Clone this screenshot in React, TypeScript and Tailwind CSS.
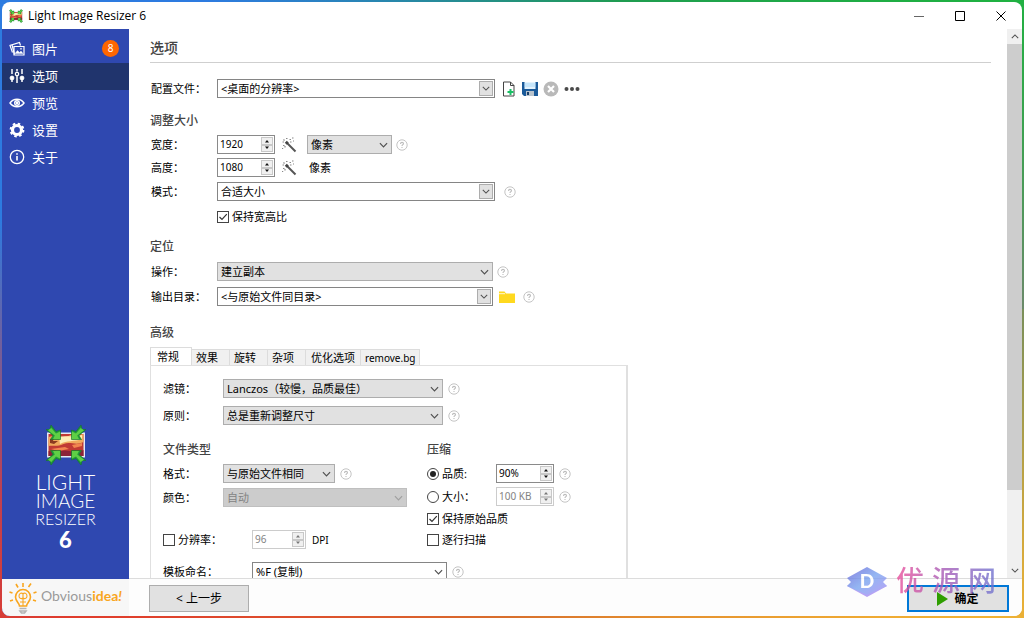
import { useState, type ReactNode } from 'react';
import clsx from 'clsx';

const TABS = ['常规', '效果', '旋转', '杂项', '优化选项', 'remove.bg'];

const ChevronIcon = ({ className }: { className?: string }) => (
  <svg viewBox="0 0 10 6" className={className} fill="none" stroke="currentColor" strokeWidth="1.3">
    <path d="M1 1l4 4 4-4" />
  </svg>
);

const HelpButton = () => (
  <button type="button" aria-label="帮助" className="shrink-0 text-[#bdbdbd]">
    <svg viewBox="0 0 12 12" className="w-3 h-3" fill="none" stroke="currentColor">
      <circle cx="6" cy="6" r="5.2" strokeWidth="0.9" />
      <path d="M4.5 4.9c0-1 .7-1.5 1.5-1.5s1.5.5 1.5 1.3c0 .9-1.5 1.1-1.5 2.2" strokeWidth="1.1" />
      <path d="M6 8v1" strokeWidth="1.1" />
    </svg>
  </button>
);

const WandIcon = () => (
  <svg viewBox="0 0 16 16" className="w-4 h-4" fill="none" stroke="#555">
    <path d="M5.5 5.5L14.5 14.5" strokeWidth="2" />
    <path d="M4.8 4.800L6.800 6.800" strokeWidth="2.800" stroke="#444" />
    <path d="M5 1.500h1.500M8.500 2.500h1.500M11 1h1.500M9 5h1.500M12 4h1M1.500 5h1.500M2.500 2.500l1 1M2 8.500h1.500M4 10.500v-1.500M1 11.500h1.200" strokeWidth="1.200" stroke="#888" />
  </svg>
);

interface SelectProps {
  id: string;
  value: string;
  variant?: 'list' | 'combo' | 'plain';
  disabled?: boolean;
  className: string;
}

const Select = ({ id, value, variant = 'list', disabled, className }: SelectProps) => (
  <div className={clsx('relative shrink-0', className)}>
    <select
      id={id}
      disabled={disabled}
      className={clsx(
        'block w-full h-[19px] appearance-none border pl-[3px] pr-5 text-[11px] leading-[17px] outline-none',
        variant === 'list' && !disabled && 'bg-[#e1e1e1] border-[#adadad]',
        variant === 'list' && disabled && 'bg-[#cccccc] border-[#bfbfbf] text-[#838383]',
        variant !== 'list' && 'bg-white border-[#858585]'
      )}
    >
      <option>{value}</option>
    </select>
    {variant === 'combo' ? (
      <span className="pointer-events-none absolute right-0.5 inset-y-0.5 w-[14px] bg-[#e1e1e1] border border-[#adadad] flex items-center justify-center text-[#505050]">
        <ChevronIcon className="w-2 h-[5px]" />
      </span>
    ) : (
      <span className={clsx('pointer-events-none absolute right-1 inset-y-0 flex items-center', disabled ? 'text-[#a0a0a0]' : 'text-[#505050]')}>
        <ChevronIcon className="w-[9px] h-[6px]" />
      </span>
    )}
  </div>
);

const SpinBox = ({ id, value, disabled, className, label }: { id: string; value: string; disabled?: boolean; className: string; label?: string }) => (
  <div className={clsx('flex h-[19px] shrink-0 border bg-white p-px', disabled ? 'border-[#cccccc]' : 'border-[#8a8a8a]', className)}>
    <input
      id={id}
      type="text"
      aria-label={label}
      defaultValue={value}
      disabled={disabled}
      className={clsx('min-w-0 flex-1 pl-px text-[10px] leading-[15px] outline-none', disabled && 'text-[#838383]')}
    />
    <div className="flex flex-col w-3">
      {['M1 3.500l2-2.500 2 2.500z', 'M1 .5l2 2.500 2-2.500z'].map((d, i) => (
        <button
          key={d}
          type="button"
          disabled={disabled}
          aria-label={i === 0 ? '增加' : '减少'}
          className="flex-1 flex items-center justify-center bg-[#f0f0f0] border border-[#c8c8c8]"
        >
          <svg viewBox="0 0 6 4" className="w-[6px] h-1" fill={disabled ? '#777' : '#111'}>
            <path d={d} />
          </svg>
        </button>
      ))}
    </div>
  </div>
);

const Check = ({ id, checked, children }: { id: string; checked?: boolean; children: ReactNode }) => (
  <label htmlFor={id} className="flex items-center gap-[3px]">
    <span className="relative w-3 h-3">
      <input id={id} type="checkbox" defaultChecked={checked} className="peer block w-3 h-3 appearance-none border border-[#444] bg-white" />
      <svg viewBox="0 0 12 12" className="pointer-events-none absolute inset-0 hidden peer-checked:block" fill="none" stroke="#333" strokeWidth="1.2">
        <path d="M2.500 6l2.500 2.500L9.800 3.200" />
      </svg>
    </span>
    {children}
  </label>
);

const Radio = ({ id, checked, children }: { id: string; checked?: boolean; children: ReactNode }) => (
  <label htmlFor={id} className="flex items-center gap-[3px] w-[69px]">
    <span className="relative w-3 h-3">
      <input id={id} name="compression" type="radio" defaultChecked={checked} className="peer block w-3 h-3 appearance-none rounded-full border border-[#444] bg-white" />
      <span className="pointer-events-none absolute inset-[3px] rounded-full bg-[#222] hidden peer-checked:block" />
    </span>
    {children}
  </label>
);

const Row = ({ id, label, wide = true, small, children }: { id: string; label: string; wide?: boolean; small?: boolean; children: ReactNode }) => (
  <div className={clsx('flex items-center', small ? 'h-[23px]' : 'h-[25px]')}>
    <label htmlFor={id} className={clsx('shrink-0', wide ? 'w-[67px] pl-px' : 'w-[60px]')}>{label}</label>
    {children}
  </div>
);

const Heading = ({ children, className }: { children: ReactNode; className?: string }) => (
  <h2 className={clsx('h-6 flex items-center text-xs font-medium text-[#444]', className)}>{children}</h2>
);

// Picture squeezed by four green arrows
const ResizerLogo = ({ className }: { className: string }) => (
  <svg viewBox="0 0 40 40" className={className}>
    <rect x="1" y="7.500" width="38" height="25" fill="#e6e8f2" />
    <rect x="2.500" y="9" width="35" height="22" fill="#c03a34" />
    <path d="M2.500 12c8-3 14 2 20-1s10 0 15-2v8c-8 4-13-1-20 2s-10 1-15 2z" fill="#f0a95c" />
    <path d="M13 12c6-2 14 1 23-2v4c-8 3-15 1-22 5z" fill="#fdeeb5" />
    <path d="M2.500 26c9 2 14-2 21 0s9 1 14-1v6h-35z" fill="#8b2338" />
    <path d="M5 24l14-2 4 2-11 2zM26 20l10-2v3l-8 2z" fill="#f2854f" />
    <path d="M4 14l4-1-1 3 5 0-4 3-4-1z" fill="#8b3a20" />
    {['', 'translate(40 0) scale(-1 1)', 'translate(0 40) scale(1 -1)', 'translate(40 40) scale(-1 -1)'].map((t) => (
      <g key={t} transform={t || undefined}>
        <path d="M0 4.500L3.800 4.500 5 0 10 6.500 14.500 5V14.500H4.500L7 10.500z" fill="#1f9a38" stroke="#15752a" strokeWidth="0.6" />
        <path d="M2 5.200L5.300 3 10 8.500l4-2V14H7l1.800-3.500z" fill="#5fcf45" />
      </g>
    ))}
  </svg>
);

const NAV: { label: string; icon: ReactNode; badge?: number }[] = [
  {
    label: '图片',
    badge: 8,
    icon: (
      <g fill="none" stroke="currentColor" strokeWidth="1.200">
        <path d="M3.500 11.500L1 4.500l9.500-3 1 3" />
        <path d="M3 3.900l2.500 9.600" />
        <path d="M5 5.500h10v8.500H5z" />
        <path d="M6 12.500l2.500-3 2 2 1.500-1.500 2 2.500z" fill="currentColor" strokeWidth="0.4" />
        <circle cx="12" cy="7.800" r=".7" fill="currentColor" strokeWidth="0.300" />
      </g>
    ),
  },
  {
    label: '选项',
    icon: (
      <g stroke="currentColor" fill="currentColor">
        <path d="M3 1v5M3 9v5M8 1v2.500M8 8v7M13 1v5M13 10v4" strokeWidth="1.500" />
        <circle cx="3" cy="10" r="1.900" />
        <circle cx="8" cy="6" r="1.700" fill="none" strokeWidth="1.200" />
        <circle cx="13" cy="10" r="1.900" />
      </g>
    ),
  },
  {
    label: '预览',
    icon: (
      <g fill="none" stroke="currentColor" strokeWidth="1.400">
        <path d="M1 8c3.500-5 10.500-5 14 0-3.500 5-10.500 5-14 0z" />
        <circle cx="8" cy="8" r="2.300" />
        <circle cx="8" cy="8" r=".6" fill="currentColor" />
      </g>
    ),
  },
  {
    label: '设置',
    icon: (
      <g fill="none" stroke="currentColor">
        <circle cx="8" cy="8" r="4.500" strokeWidth="3.200" />
        <circle cx="8" cy="8" r="6.400" strokeWidth="2" strokeDasharray="2.510 2.510" />
      </g>
    ),
  },
  {
    label: '关于',
    icon: (
      <g fill="none" stroke="currentColor">
        <circle cx="8" cy="8" r="6.700" strokeWidth="1.300" />
        <path d="M8 7v4.500M8 4.300v1.500" strokeWidth="1.600" />
      </g>
    ),
  },
];

const Sidebar = () => {
  const [active, setActive] = useState('选项');

  return (
    <aside className="w-[127px] shrink-0 flex flex-col bg-[#2f48b0] text-white">
      <nav className="pt-[7px]">
        {NAV.map((item) => (
          <button
            key={item.label}
            type="button"
            onClick={() => setActive(item.label)}
            className={clsx('w-full h-[27px] flex items-center gap-[7px] pl-[7px] pr-2.5 pb-0.5 text-[13px]', active === item.label && 'bg-[#20346d]')}
          >
            <svg viewBox="0 0 16 16" className="w-4 h-4">{item.icon}</svg>
            {item.label}
            {item.badge && (
              <span className="ml-auto w-[17px] h-[17px] rounded-full bg-[#ff6600] text-[10px] leading-[17px] text-center">{item.badge}</span>
            )}
          </button>
        ))}
      </nav>
      <div className="mt-auto pb-[26px] flex flex-col items-center font-['Lato',sans-serif] font-light">
        <ResizerLogo className="w-10 h-10 mb-[7px]" />
        <span className="text-[21px] leading-5">LIGHT</span>
        <span className="text-[19px] leading-[18px]">IMAGE</span>
        <span className="text-[16px] leading-[17px]">RESIZER</span>
        <span className="text-[22px] leading-[26px] font-black">6</span>
      </div>
      <div className="h-[37px] bg-[#f7f7f7] flex items-center pl-[7px] gap-1">
        <svg viewBox="0 0 28 32" className="w-7 h-8" fill="none" stroke="#f9a61f" strokeWidth="1.600">
          <path d="M10.500 24c0-3-4-4.500-4-9a7.500 7.500 0 0115 0c0 4.500-4 6-4 9z" />
          <path d="M10 14c0-3 3-3.500 4-2 1-1.500 4-1 4 2s-3 3-4 2c-1 1-4 1-4-2zM14 12v12M11 20h6" strokeWidth="1.100" />
          <path d="M14 1v4M7 2l2 3.500M22 1.500L19.500 5M.5 10l3 1M27.500 10l-3 1M1 19l3-1M27 19l-3-1" />
          <path d="M10.500 26.500h7M11 29h6l-1.500 2h-3z" stroke="#b5b5b5" />
        </svg>
        <span className="pb-1 font-['Lato',sans-serif] text-[14px] text-[#9a9a9a]">
          Obvious<b className="text-[#f9a61f]">idea<i>!</i></b>
        </span>
      </div>
    </aside>
  );
};

const AdvancedPanel = () => (
  <div className="max-w-[478px] border-2 border-t border-l border-[#e0e0e0] bg-white pl-3 pt-2.5 pb-10">
    <div className="flex flex-col gap-0.5">
      <Row id="filter" label="滤镜：" wide={false}>
        <Select id="filter" value="Lanczos（较慢，品质最佳）" className="w-[220px] mr-[5px]" />
        <HelpButton />
      </Row>
      <Row id="policy" label="原则：" wide={false}>
        <Select id="policy" value="总是重新调整尺寸" className="w-[220px] mr-[5px]" />
        <HelpButton />
      </Row>
    </div>

    <div className="mt-2.5 flex">
      <div className="w-[264px]">
        <Heading>文件类型</Heading>
        <Row id="format" label="格式：" wide={false} small>
          <Select id="format" value="与原始文件相同" className="w-28 mr-[5px]" />
          <HelpButton />
        </Row>
        <Row id="color" label="颜色：" wide={false}>
          <Select id="color" value="自动" disabled className="w-[184px]" />
        </Row>
        <div className="mt-[17px] h-[25px] flex items-center">
          <div className="w-[89px]">
            <Check id="resolution">分辨率：</Check>
          </div>
          <SpinBox id="dpi" label="DPI" value="96" disabled className="w-[54px] mr-[6px]" />
          <span className="text-[10px]">DPI</span>
        </div>
      </div>
      <div>
        <Heading>压缩</Heading>
        <div className="h-[23px] flex items-center">
          <Radio id="by-quality" checked>品质:</Radio>
          <SpinBox id="quality" label="品质" value="90%" className="w-[58px] mr-[5px]" />
          <HelpButton />
        </div>
        <div className="h-[23px] flex items-center">
          <Radio id="by-size">大小：</Radio>
          <SpinBox id="size" label="大小" value="100 KB" disabled className="w-[58px] mr-[5px]" />
          <HelpButton />
        </div>
        <div className="h-[22px] flex items-center">
          <Check id="keep-quality" checked>保持原始品质</Check>
        </div>
        <div className="h-5 flex items-center">
          <Check id="progressive">逐行扫描</Check>
        </div>
      </div>
    </div>

    <div className="mt-[7px] h-[25px] flex items-center">
      <label htmlFor="template" className="w-[89px]">模板命名：</label>
      <Select id="template" value="%F (复制)" variant="plain" className="w-[195px] mr-[5px]" />
      <HelpButton />
    </div>
  </div>
);

const OptionsPage = () => {
  const [tab, setTab] = useState('常规');

  return (
    <div className="flex-1 min-w-0 overflow-y-auto [scrollbar-width:none] pl-[21px] pr-4">
      <h1 className="h-[34px] pt-1 flex items-center border-b border-[#cfcfcf] text-sm font-medium text-[#444]">选项</h1>

      <div className="mt-[13px]">
        <Row id="profile" label="配置文件：">
          <Select id="profile" value="<桌面的分辨率>" variant="combo" className="w-[278px] mr-[6px]" />
          <div className="flex items-center gap-[5px]">
            <button type="button" aria-label="新建">
              <svg viewBox="0 0 16 16" className="w-4 h-4" fill="none">
                <path d="M2.500 1h7l3.500 3.500V15H2.500z" stroke="#444" />
                <path d="M9.500 1v3.500H13" stroke="#444" />
                <path d="M9.500 8v6M6.500 11h6" stroke="#19c065" strokeWidth="2" />
              </svg>
            </button>
            <button type="button" aria-label="保存">
              <svg viewBox="0 0 16 16" className="w-4 h-4">
                <path d="M0 1h16v14H2l-2-2z" fill="#1b5a99" />
                <path d="M2.500 1h11v7h-11z" fill="#e4f3fd" />
                <path d="M2.500 3h11M2.500 5h11" stroke="#a9d8f7" />
                <path d="M4 10h8v5H4z" fill="#b9c3cc" />
                <path d="M5 11h2v3H5z" fill="#1b3f69" />
              </svg>
            </button>
            <button type="button" aria-label="删除">
              <svg viewBox="0 0 16 16" className="w-4 h-4">
                <circle cx="8" cy="8" r="7.500" fill="#b9b9b9" />
                <path d="M5 5l6 6M11 5l-6 6" stroke="#fff" strokeWidth="2.200" />
              </svg>
            </button>
            <button type="button" aria-label="更多">
              <svg viewBox="0 0 16 16" className="w-4 h-4" fill="#4a4a4a">
                <circle cx="2.500" cy="8" r="2" />
                <circle cx="8" cy="8" r="2" />
                <circle cx="13.500" cy="8" r="2" />
              </svg>
            </button>
          </div>
        </Row>
      </div>

      <Heading className="mt-2">调整大小</Heading>
      <Row id="width" label="宽度：" small>
        <SpinBox id="width" value="1920" className="w-[58px] mr-[6px]" />
        <button type="button" aria-label="自动宽度" className="mr-2.5"><WandIcon /></button>
        <Select id="unit" value="像素" className="w-[85px] mr-1" />
        <HelpButton />
      </Row>
      <Row id="height" label="高度：" small>
        <SpinBox id="height" value="1080" className="w-[58px] mr-[6px]" />
        <button type="button" aria-label="自动高度" className="mr-3"><WandIcon /></button>
        <span>像素</span>
      </Row>
      <Row id="mode" label="模式：">
        <Select id="mode" value="合适大小" variant="combo" className="w-[278px] mr-[9px]" />
        <HelpButton />
      </Row>
      <div className="h-[25px] flex items-center pl-[67px]">
        <Check id="keep-ratio" checked>保持宽高比</Check>
      </div>

      <Heading className="mt-[6px]">定位</Heading>
      <Row id="action" label="操作：">
        <Select id="action" value="建立副本" className="w-[276px] mr-1" />
        <HelpButton />
      </Row>
      <Row id="output" label="输出目录：">
        <Select id="output" value="<与原始文件同目录>" variant="combo" className="w-[276px] mr-[6px]" />
        <button type="button" aria-label="浏览" className="mr-2">
          <svg viewBox="0 0 16 16" className="w-4 h-4" fill="#ffd91f">
            <path d="M0 2.500h5.500L7 4.500h9V14H0z" />
            <path d="M0 4.700h6" stroke="#fff" strokeWidth=".8" />
          </svg>
        </button>
        <HelpButton />
      </Row>

      <Heading className="mt-3">高级</Heading>
      <div role="tablist" className="mt-0.5 h-[18px] flex items-end">
        {TABS.map((name) => (
          <button
            key={name}
            type="button"
            role="tab"
            aria-selected={tab === name}
            onClick={() => setTab(name)}
            className={clsx(
              'border border-b-0 border-[#dcdcdc]',
              tab === name ? 'h-[18px] pl-[6px] pr-3 bg-white' : 'h-4 border-l-0 leading-4 bg-[#f0f0f0]',
              tab !== name && name === 'remove.bg' && 'px-1 text-[10px]',
              tab !== name && name === '优化选项' && 'px-[5px]',
              tab !== name && name.length === 2 && 'pl-1 pr-[11px]'
            )}
          >
            {name}
          </button>
        ))}
      </div>
      <AdvancedPanel />
    </div>
  );
};

const ScrollBar = () => (
  <div className="w-[15px] shrink-0 flex flex-col bg-[#f0f0f0] text-[#505050]">
    <button type="button" aria-label="向上滚动" className="h-[15px] flex items-center justify-center">
      <ChevronIcon className="w-2 h-[5px] rotate-180" />
    </button>
    <div className="flex-1">
      <div className="h-[86%] bg-[#cdcdcd]" />
    </div>
    <button type="button" aria-label="向下滚动" className="h-[15px] flex items-center justify-center">
      <ChevronIcon className="w-2 h-[5px]" />
    </button>
  </div>
);

const Watermark = () => (
  <div className="pointer-events-none absolute right-[26px] bottom-[18px] flex items-start gap-2 opacity-80">
    <svg viewBox="0 0 42 32" className="w-[42px] h-8">
      <defs>
        <linearGradient id="mark" x1="0" y1="0" x2="1" y2="1">
          <stop offset="0" stopColor="#6a63d8" />
          <stop offset=".5" stopColor="#7aa5f0" />
          <stop offset="1" stopColor="#a98bf5" />
        </linearGradient>
      </defs>
      <path d="M21 7L41 20 21 31 1 20z" fill="#a58cf2" />
      <path d="M21 1l20 11-4 4 4 4-20 9L1 20l4-4-4-4z" fill="url(#mark)" />
      <text x="21" y="22" textAnchor="middle" fill="#fff" className="font-['Lato',sans-serif] text-[19px] font-black">D</text>
    </svg>
    <span className="flex gap-2 bg-gradient-to-r from-[#ea4c9a] via-[#a45bb8] to-[#6f74d0] bg-clip-text text-transparent text-[28px] leading-7 font-medium">
      <span>优</span>
      <span>源</span>
      <span>网</span>
    </span>
  </div>
);

const App = () => (
  <div
    lang="zh-CN"
    className="h-screen p-0.5 bg-[conic-gradient(from_90deg,#7a8f5a,#f2b233_33deg,#d8702c_90deg,#e03c2c_145deg,#c04050_160deg,#2d7be0_190deg,#2d7be0_225deg,#1f9c50_290deg,#1fb141_328deg,#6b8a6a)] font-['Noto_Sans','Noto_Sans_CJK_SC',sans-serif] text-[11px] leading-4 text-black"
  >
    <div className="h-full flex flex-col rounded-lg overflow-hidden bg-white">
      <header className="h-[27px] shrink-0 flex items-center pl-[7px] pr-4">
        <ResizerLogo className="w-[14px] h-[14px] mr-[5px]" />
        <span className="font-['Open_Sans',sans-serif] text-xs">Light Image Resizer 6</span>
        <div className="ml-auto flex items-center gap-[31px] text-black">
          <button type="button" aria-label="最小化">
            <svg viewBox="0 0 10 10" className="w-2.5 h-2.5" stroke="#666"><path d="M0 5.500h10" /></svg>
          </button>
          <button type="button" aria-label="最大化">
            <svg viewBox="0 0 10 10" className="w-2.5 h-2.5" fill="none" stroke="currentColor"><path d="M.5.5h9v9h-9z" /></svg>
          </button>
          <button type="button" aria-label="关闭">
            <svg viewBox="0 0 10 10" className="w-2.5 h-2.5" stroke="currentColor"><path d="M.5.5l9 9M9.500.5l-9 9" /></svg>
          </button>
        </div>
      </header>

      <div className="flex-1 min-h-0 flex">
        <Sidebar />
        <div className="relative flex-1 min-w-0 flex flex-col">
          <main className="flex-1 min-h-0 flex">
            <OptionsPage />
            <ScrollBar />
          </main>
          <footer className="h-[38px] shrink-0 flex items-center justify-between pt-0.5 pl-5 pr-[13px] border-t border-[#dcdcdc] bg-[#fdfdfd]">
            <button type="button" className="w-[100px] h-[27px] bg-[#e1e1e1] border border-[#adadad] text-xs">&lt; 上一步</button>
            <button type="button" className="w-[102px] h-[27px] bg-[#e1e1e1] border-2 border-[#0078d7] flex items-center justify-center gap-1.5 text-xs font-bold">
              <svg viewBox="0 0 11 14" className="w-[11px] h-[14px]" fill="#2f9e00"><path d="M0 0l11 7-11 7z" /></svg>
              确定
            </button>
          </footer>
          <Watermark />
        </div>
      </div>
    </div>
  </div>
);

export default App;
